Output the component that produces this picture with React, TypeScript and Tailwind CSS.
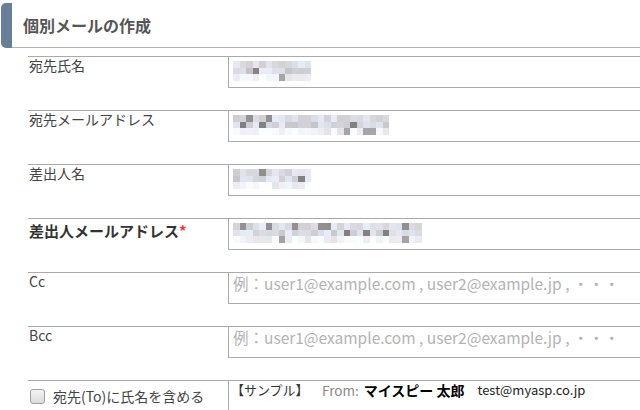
import React from 'react';

const font = { fontFamily: '"Noto Sans CJK JP", "Noto Sans", sans-serif' };

interface Row {
    label: string;
    required?: boolean;
    cells?: number;
    seed?: number;
    placeholder?: string;
}

const rows: Row[] = [
    { label: '宛先氏名', cells: 12, seed: 3 },
    { label: '宛先メールアドレス', cells: 24, seed: 7 },
    { label: '差出人名', cells: 12, seed: 11 },
    { label: '差出人メールアドレス', required: true, cells: 29, seed: 5 },
    { label: 'Cc', placeholder: '例：user1@example.com , user2@example.jp , ・・・' },
    { label: 'Bcc', placeholder: '例：user1@example.com , user2@example.jp , ・・・' },
];

// pixelated stand-in for the blurred personal data
function Mosaic({ cells, seed }: { cells: number; seed: number }) {
    const shade = (i: number, r: number) => {
        const n = Math.abs(Math.sin((i + 1) * 12.9898 + (r + 1) * 78.233 + seed * 3.7) * 43758.5453) % 1;
        const base = r === 1 ? 190 : r === 0 ? 205 : 225;
        const v = Math.round(base + n * (r === 1 ? 50 : 35) - (n < 0.1 ? 60 : 0));
        const tint = Math.round(n * 8);
        return `rgb(${v - tint}, ${v - 3}, ${v + tint})`;
    };
    return (
        <div className="flex flex-col">
            {[0, 1, 2].map(r => (
                <div key={r} className="flex">
                    {Array.from({ length: cells }).map((_, i) => (
                        <div key={i} className="w-[6.5px] h-[6.5px]" style={{ backgroundColor: shade(i, r) }} />
                    ))}
                </div>
            ))}
        </div>
    );
}

export default function App() {
    return (
        <div className="w-[640px] h-[410px] overflow-hidden bg-white" style={font}>
            <div className="flex mt-[3px] ml-[1px]">
                <div className="w-[11px] h-[45px] rounded-l-[5px] bg-[#687f98]" />
                <div className="flex-1 h-[45px] border-b border-[#b4b4b4] flex items-center pl-[11px]">
                    <h1 className="text-[16px] font-bold text-[#555]">個別メールの作成</h1>
                </div>
            </div>

            <div className="ml-[28px] mt-[8px]">
                {rows.map(row => (
                    <div key={row.label} className="flex mb-[22px]">
                        <div className="w-[200px] shrink-0 border-t border-[#aaa] pl-[1px]">
                            {row.required ? (
                                <div className="pt-[3px] text-[15px] font-bold text-[#333] leading-[18px]">
                                    {row.label}
                                    <span className="text-[#e03b3b]">*</span>
                                </div>
                            ) : (
                                <div className="text-[14px] text-[#444] leading-[16px]">{row.label}</div>
                            )}
                        </div>
                        <div className="w-[440px] shrink-0 h-[32px] border border-[#aaa] pl-[4px]">
                            {row.cells ? (
                                <div className="pt-[4px]">
                                    <Mosaic cells={row.cells} seed={row.seed ?? 1} />
                                </div>
                            ) : (
                                <div className="text-[15.5px] leading-[20px] text-[#b3b3b3] whitespace-nowrap">
                                    {row.placeholder}
                                </div>
                            )}
                        </div>
                    </div>
                ))}

                <div className="flex">
                    <div className="w-[200px] shrink-0 border-t border-[#aaa] flex items-center self-start pt-[6px] pl-[2px]">
                        <span className="w-[15px] h-[15px] rounded-[3px] border border-[#a0a0a0] bg-gradient-to-b from-[#f4f4f4] to-[#dcdcdc]" />
                        <span className="ml-[8px] text-[14px] leading-[18px] text-[#444]">宛先(To)に氏名を含める</span>
                    </div>
                    <div className="w-[440px] shrink-0 h-[40px] border-t border-l border-[#aaa] pl-[2px] flex items-start text-[13px] leading-[18px] whitespace-nowrap">
                        <span className="w-[91px] text-[#333]">【サンプル】</span>
                        <span className="text-[13.5px] text-[#888]">From:</span>
                        <span className="ml-[5px] text-[14px] font-bold text-black">マイスピー 太郎</span>
                        <span className="ml-[13px] text-[#222]">test@myasp.co.jp</span>
                    </div>
                </div>
            </div>
        </div>
    );
}
